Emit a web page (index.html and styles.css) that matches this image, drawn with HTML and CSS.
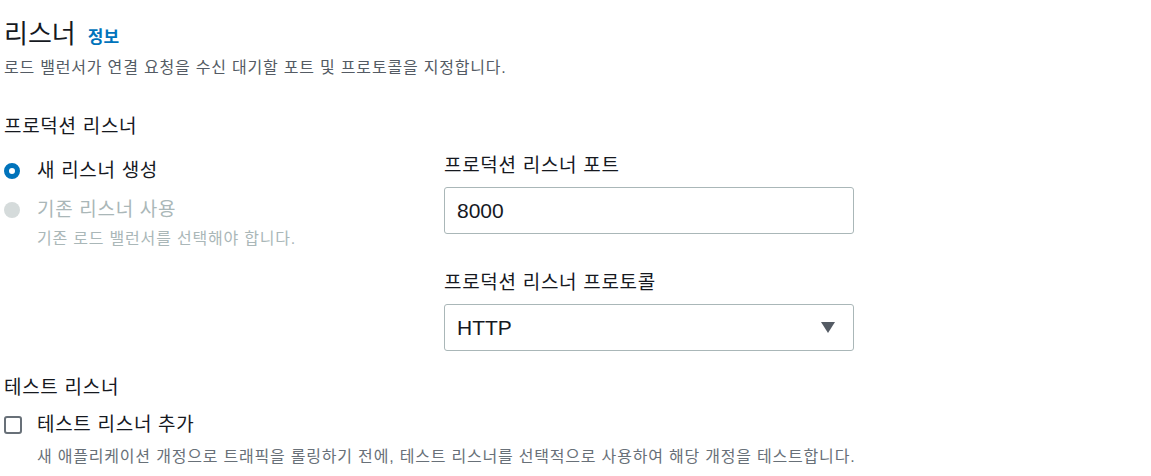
FILE: index.html
```html
<!DOCTYPE html>
<html lang="ko">
<head>
<meta charset="utf-8">
<link rel="stylesheet" href="styles.css">
</head>
<body>
<section class="panel">
  <h2 class="title"><span>리스너</span><a class="info" href="#">정보</a></h2>
  <p class="desc">로드 밸런서가 연결 요청을 수신 대기할 포트 및 프로토콜을 지정합니다.</p>

  <h3 class="heading">프로덕션 리스너</h3>
  <div class="cols">
    <div class="left">
      <div class="option">
        <span class="radio radio-on"></span>
        <span class="opt-label">새 리스너 생성</span>
      </div>
      <div class="option option-disabled">
        <span class="radio radio-off"></span>
        <span class="opt-label">기존 리스너 사용</span>
      </div>
      <p class="opt-desc disabled-desc">기존 로드 밸런서를 선택해야 합니다.</p>
    </div>
    <div class="right">
      <label class="field-label">프로덕션 리스너 포트</label>
      <div class="input">8000</div>
      <label class="field-label field-label-2">프로덕션 리스너 프로토콜</label>
      <div class="input select">
        <span>HTTP</span>
        <svg class="caret" width="14" height="11" viewBox="0 0 14 11"><path d="M0 0H14L7 11Z" fill="#545b64"/></svg>
      </div>
    </div>
  </div>

  <h3 class="heading heading-test">테스트 리스너</h3>
  <div class="option option-check">
    <span class="checkbox"></span>
    <span class="opt-label">테스트 리스너 추가</span>
  </div>
  <p class="opt-desc test-desc">새 애플리케이션 개정으로 트래픽을 롤링하기 전에, 테스트 리스너를 선택적으로 사용하여 해당 개정을 테스트합니다.</p>
</section>
</body>
</html>
```

FILE: styles.css
```css
* { box-sizing: border-box; }
html, body { margin: 0; padding: 0; background: #ffffff; }
body {
  font-family: "Liberation Sans", "Noto Sans CJK KR", sans-serif;
  color: #16191f;
}
.panel { padding: 0 4px; width: 1151px; }
.title {
  margin: 19px 0 0;
  height: 30px;
  font-size: 26px;
  line-height: 30px;
  font-weight: 400;
  display: flex;
  align-items: baseline;
}
.info {
  margin-left: 12px;
  font-size: 17px;
  line-height: 20px;
  font-weight: 700;
  color: #0073bb;
  text-decoration: none;
}
.desc {
  margin: 8px 0 0;
  height: 22px;
  font-size: 16px;
  line-height: 22px;
  letter-spacing: 0.8px;
  color: #545b64;
}
.heading {
  margin: 36px 0 0;
  height: 24px;
  font-size: 19px;
  line-height: 24px;
  letter-spacing: 0.7px;
  font-weight: 400;
}
.heading-test { margin-top: 25px; }
.cols {
  display: grid;
  grid-template-columns: 440px 410px;
  margin-top: 13px;
}
.left { padding-top: 6px; }
.option {
  display: flex;
  align-items: center;
  height: 26px;
  font-size: 19px;
  letter-spacing: 0.7px;
}
.option-disabled { margin-top: 13px; color: #aab7b8; }
.opt-label { margin-left: 17px; line-height: 26px; }
.radio {
  width: 16px;
  height: 16px;
  border-radius: 50%;
  flex: none;
}
.radio-on { border: 5px solid #0073bb; background: #fff; }
.radio-off { background: #d5dbdb; }
.opt-desc {
  margin: 6px 0 0 33px;
  height: 20px;
  font-size: 16px;
  line-height: 20px;
  letter-spacing: 0.8px;
  color: #687078;
}
.disabled-desc { color: #aab7b8; }
.field-label {
  display: block;
  height: 26px;
  padding-top: 2px;
  font-size: 19px;
  line-height: 24px;
  letter-spacing: 0.7px;
}
.field-label-2 { margin-top: 35px; }
.input {
  margin-top: 9px;
  height: 47px;
  border: 1px solid #aab7b8;
  border-radius: 3px;
  padding: 0 12px;
  display: flex;
  align-items: center;
  font-family: "Liberation Sans", sans-serif;
  font-size: 21px;
  color: #16191f;
}
.select { justify-content: space-between; padding-right: 18px; }
.caret { display: block; }
.option-check { margin-top: 12px; }
.checkbox {
  width: 18px;
  height: 18px;
  border: 2px solid #687078;
  border-radius: 3px;
  flex: none;
}
.option-check .opt-label { margin-left: 15px; }
.test-desc { margin-top: 9px; }
```
